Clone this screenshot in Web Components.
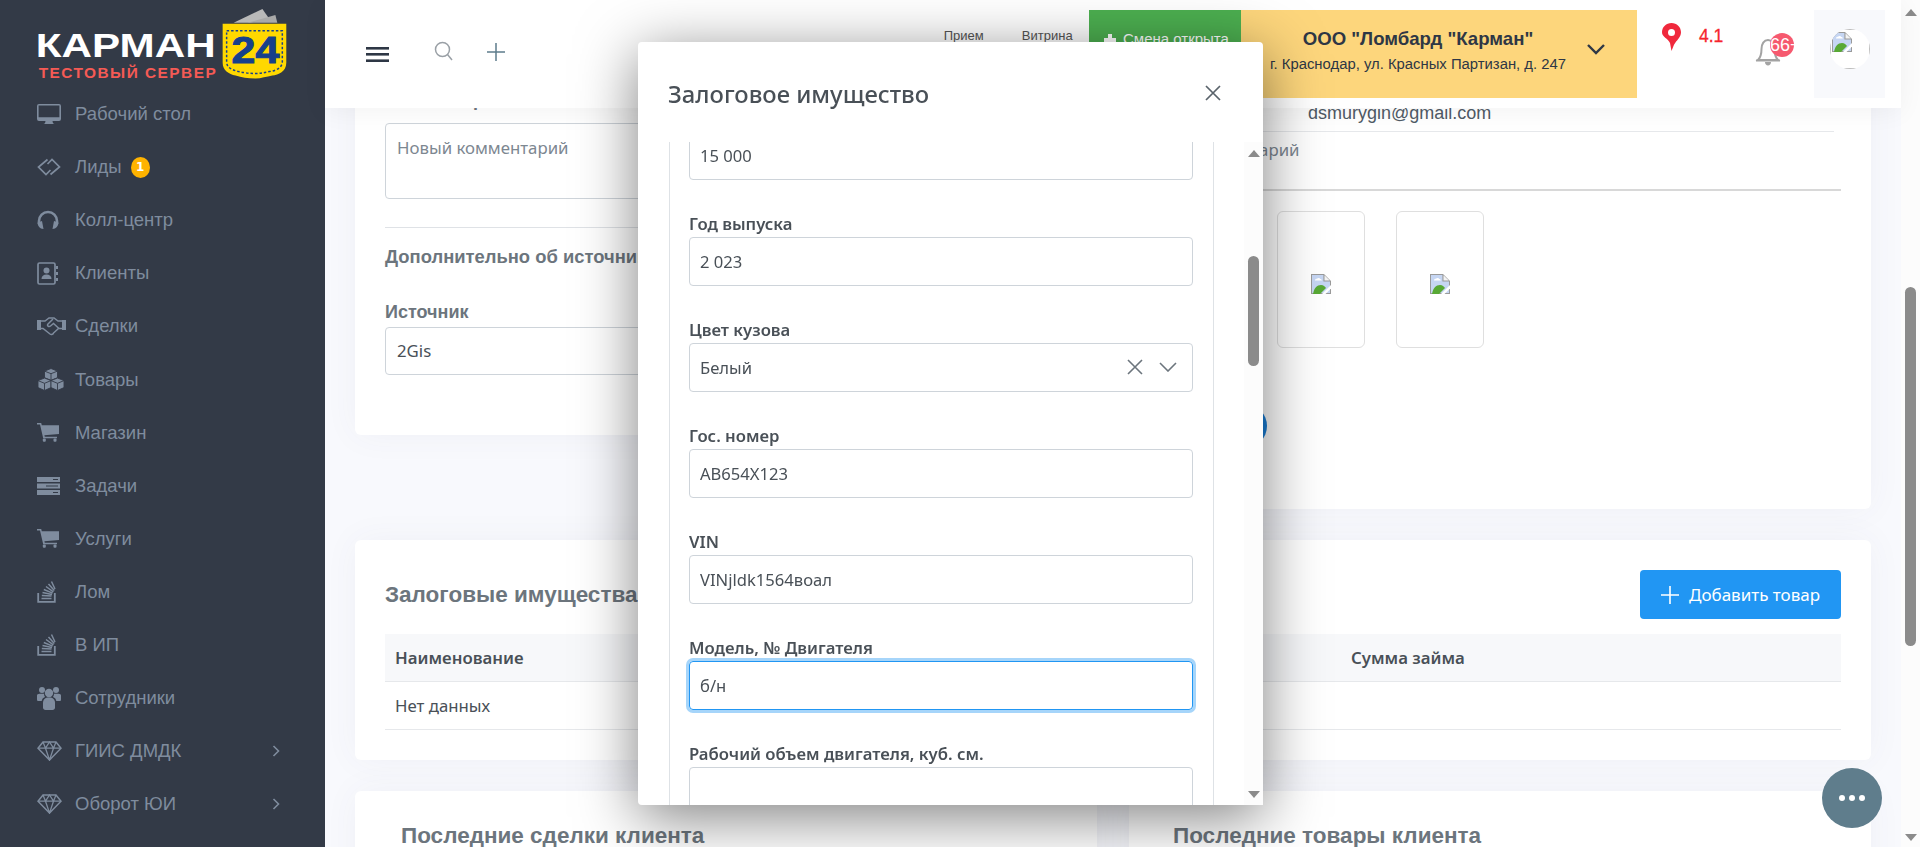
<!DOCTYPE html>
<html lang="ru">
<head>
<meta charset="utf-8">
<title>Залоговое имущество</title>
<style>
html, body { margin: 0; height: 847px; overflow: hidden; background: #f8f9fd; }
</style>
</head>
<body>
<app-shell></app-shell>
<script>
const ICONS = {
  desktop: '<svg width="24" height="21" viewBox="0 0 24 21"><path fill-rule="evenodd" d="M2 0h20a2 2 0 0 1 2 2v13a2 2 0 0 1-2 2H2a2 2 0 0 1-2-2V2a2 2 0 0 1 2-2zM1.6 1.6v11.6h20.8V1.6z"/><path d="M8.5 17h7l.5 2.2 1.5.8h-11l1.5-.8z"/></svg>',
  leads: '<svg width="24" height="18" viewBox="0 0 24 18" fill="none" stroke="currentColor" stroke-width="1.7"><path d="M10.5 1.500 1.500 9l7.500 7.500 4.500-4.500"/><path d="M13.500 16.500 22.500 9 15 1.500l-4.500 4.500"/></svg>',
  headset: '<svg width="22" height="20" viewBox="0 0 22 20"><path fill="none" stroke="currentColor" stroke-width="2.6" d="M2 14v-3a9 9 0 0 1 18 0v3"/><path d="M.6 12.500 5 11l1.500 8C2.800 19 .6 16 .6 12.500zM21.400 12.500 17 11l-1.500 8c3.700 0 5.900-3 5.900-6.500z"/></svg>',
  book: '<svg width="21" height="23" viewBox="0 0 21 23"><rect x="1" y="1" width="17" height="21" rx="1.500" fill="none" stroke="currentColor" stroke-width="1.700"/><circle cx="9.500" cy="8.500" r="3"/><path d="M4.500 17c0-3 2-4.500 5-4.500s5 1.500 5 4.500z"/><path d="M19 4h2v3h-2zM19 10h2v3h-2zM19 16h2v3h-2z"/></svg>',
  deal: '<svg width="29" height="20" viewBox="0 0 29 20" fill="none" stroke="currentColor" stroke-width="1.500"><path fill="currentColor" stroke="none" d="M0 4h4v10H0zM25 4h4v10h-4z"/><path d="M4 5h4l4-3h5l4 3h4M4 12.500h2l7 5.500c1.500 1 3.500 0 3.500-1l5-4.500H25"/><path d="M16 3l-5 5c-1.500 1.500.8 3.500 2.500 2l3-2.500 5.500 5"/></svg>',
  cubes: '<svg width="28" height="23" viewBox="0 0 28 23"><g stroke="#333a47" stroke-width=".9"><path fill="currentColor" d="M14 .5l6.500 2.600v6.600L14 12.300 7.500 9.700V3.100z"/><path fill="currentColor" d="M7.500 10 14 12.600v7L7.500 22.500 1 19.600v-7z"/><path fill="currentColor" d="M20.500 10 27 12.600v7l-6.500 2.900-6.500-2.900v-7z"/><path fill="none" d="M7.500 3.100 14 5.700l6.500-2.600M14 5.700v6.600M1 12.600l6.500 2.700 6.500-2.700M7.500 15.300v7.200M14 12.600l6.500 2.700 6.500-2.700M20.500 15.300v7.200"/></g></svg>',
  cart: '<svg width="22" height="19" viewBox="0 0 22 19"><path d="M0 0h4.200l.6 2.200H22v8.800L7.400 12.300l.4 1.500H20v1.500H6.200L3 1.600H0z"/><rect x="5.800" y="15.500" width="3" height="3.300" rx="1"/><rect x="16.500" y="15.500" width="3" height="3.300" rx="1"/></svg>',
  tasks: '<svg width="23" height="18" viewBox="0 0 23 18"><path fill-rule="evenodd" d="M0 0h23v5H0zM16 2v1h5V2zM0 6.500h23v5H0zM9 8.500v1h12v-1zM0 13h23v5H0zM16 15v1h5v-1z"/></svg>',
  stack: '<svg width="20" height="23" viewBox="0 0 20 23" fill="none" stroke="currentColor" stroke-width="1.500"><path stroke-width="1.800" d="M1.200 13v8.800h16.600V13"/><path d="M4.500 18.500h10M4.800 15.500l9.700.6M5.500 12.500l9.500 2M6.800 9.500l8.800 3.600M9 6.500l7.400 5.300M11.500 4l5.800 6.500M14.500 1.500l3.500 7.500"/></svg>',
  users: '<svg width="24" height="24" viewBox="0 0 24 24"><circle cx="5" cy="4" r="3"/><circle cx="19" cy="4" r="3"/><circle cx="12" cy="7" r="4.200"/><path d="M0 9.500c0-1 1-1.800 2.500-1.800H7a6 6 0 0 0 1 3.300c-2 .8-3 2-3.300 4H1.500C.5 15 0 14.500 0 13.500zM24 9.500c0-1-1-1.800-2.500-1.800H17a6 6 0 0 1-1 3.300c2 .8 3 2 3.300 4h3.200c1 0 1.500-.5 1.500-1.500z"/><path d="M6 17c0-3.500 2-5.500 6-5.500s6 2 6 5.500v4.500c0 1.500-1 2.500-2.500 2.500h-7C7 24 6 23 6 21.500z"/></svg>',
  gem: '<svg width="25" height="20" viewBox="0 0 25 20" fill="none" stroke="currentColor" stroke-width="1.300"><path stroke-width="1.500" d="M6 1h13l5 6.200L12.500 19 1 7.200z"/><path d="M1 7.200h23M8.500 7.200l4 11.800 4-11.800M6 1l2.500 6.200L12.500 1l4 6.200L19 1"/></svg>',
  chevron: '<svg width="8" height="12" viewBox="0 0 8 12" fill="none" stroke="currentColor" stroke-width="1.600"><path d="M1.500 1l5 5-5 5"/></svg>',
  dot: '<svg width="24" height="14" viewBox="0 0 24 14"><path d="M13 0l2 3h-4z"/></svg>'
};

const BROKEN = '<svg width="20" height="20" viewBox="0 0 20 20"><path fill="#9a9a9a" d="M0 0h13l7 7v13H0z"/><path fill="#c6d6f3" d="M1 1h11.400v6.600H19V19H1z"/><path fill="#fff" d="M4 6.500c0-1.300 1-1.900 2-1.700.5-1.200 2.700-1.200 3.200.1 1 0 1.700.6 1.700 1.600z"/><path fill="#f4f4f4" d="M13.500 1.300 18.800 6.500h-5.300z"/><path fill="#58a935" d="M2 20c1-6 4-9 8-9 2.500 0 4 1.500 5 3l-6 6z"/><path fill="#fff" d="M20 11v3.500L14.500 20H11z"/></svg>';

class AppShell extends HTMLElement {
  connectedCallback() {
    this.attachShadow({ mode: 'open' });
    this.shadowRoot.innerHTML = `
<style>
  :host { display: flex; width: 1920px; height: 847px; overflow: hidden; }
  .main { flex: 0 0 1576px; display: flex; flex-direction: column; height: 847px; min-width: 0; }
  page-content { flex: 1; min-height: 0; }
</style>
<app-sidebar></app-sidebar>
<div class="main">
  <app-header></app-header>
  <page-content></page-content>
</div>
<scroll-rail thumb-top="287" thumb-height="359" first="9" last="834" style="height:847px"></scroll-rail>
<pledge-modal></pledge-modal>
<chat-fab></chat-fab>`;
  }
}

class AppSidebar extends HTMLElement {
  connectedCallback() {
    this.attachShadow({ mode: 'open' });
    this.shadowRoot.innerHTML = `
<style>
  :host { display: block; flex: 0 0 325px; width: 325px; height: 847px; background: #333a47; overflow: hidden; }
  .logo { display: block; height: 87.500px; }
  svg text { font-family: "Liberation Sans", Arial, sans-serif; font-weight: 700; }
</style>
<svg class="logo" width="325" height="88" viewBox="0 0 325 88">
  <path fill="#b9b9b9" d="M234 23 263 9l7 10-20 4z"/>
  <path fill="#a9a9a9" d="M248 23l28-8 2 8z"/>
  <path fill="#ffd800" d="M223 24h64v39c0 9-8 12-14 13-6 1-11 3-17 3-8 0-14-1-20-3-7-2-13-5-13-13z"/>
  <path fill="none" stroke="#17408b" stroke-width="1.500" stroke-dasharray="2.500 2" d="M227 31h56v31c0 6-6 9-13 10-5 1-9 2-14 2-6 0-12-1-17-2-7-2-12-4-12-10z"/>
  <text x="232" y="63" font-size="37" fill="#17408b" textLength="48" lengthAdjust="spacingAndGlyphs" stroke="#17408b" stroke-width="1">24</text>
  <text x="35" y="57" font-size="33" fill="#ffffff" textLength="181" lengthAdjust="spacingAndGlyphs">КАРМАН</text>
  <text x="38" y="78" font-size="15.500" fill="#f55a55" textLength="178" lengthAdjust="spacing">ТЕСТОВЫЙ СЕРВЕР</text>
</svg>
<side-item icon="desktop">Рабочий стол</side-item>
<side-item icon="leads" badge="1">Лиды</side-item>
<side-item icon="headset">Колл-центр</side-item>
<side-item icon="book">Клиенты</side-item>
<side-item icon="deal">Сделки</side-item>
<side-item icon="cubes">Товары</side-item>
<side-item icon="cart">Магазин</side-item>
<side-item icon="tasks">Задачи</side-item>
<side-item icon="cart">Услуги</side-item>
<side-item icon="stack">Лом</side-item>
<side-item icon="stack">В ИП</side-item>
<side-item icon="users">Сотрудники</side-item>
<side-item icon="gem" arrow>ГИИС ДМДК</side-item>
<side-item icon="gem" arrow>Оборот ЮИ</side-item>
<side-item icon="dot"></side-item>`;
  }
}

class SideItem extends HTMLElement {
  connectedCallback() {
    const badge = this.getAttribute('badge');
    this.attachShadow({ mode: 'open' });
    this.shadowRoot.innerHTML = `
<style>
  :host { display: flex; align-items: center; height: 53.100px; padding: 0 45px 0 37px; color: #7f8c9e;
    font: 18.500px "Liberation Sans", Arial, sans-serif; }
  .ico { flex: 0 0 38px; display: flex; align-items: center; fill: currentColor; }
  .badge { margin-left: 9px; width: 19px; height: 21px; border-radius: 50%; background: #ffb300; color: #fff;
    font: 700 12px/21px "DejaVu Sans", sans-serif; text-align: center; }
  .arrow { margin-left: auto; display: flex; }
</style>
<span class="ico">${ICONS[this.getAttribute('icon')]}</span>
<slot></slot>
${badge ? `<span class="badge">${badge}</span>` : ''}
${this.hasAttribute('arrow') ? `<span class="arrow">${ICONS.chevron}</span>` : ''}`;
  }
}

class AppHeader extends HTMLElement {
  connectedCallback() {
    this.attachShadow({ mode: 'open' });
    this.shadowRoot.innerHTML = `
<style>
  :host { display: flex; flex: 0 0 108px; height: 108px; background: #fff; position: relative; z-index: 2;
    box-shadow: 0 4px 24px rgba(0,0,0,.05); font-family: "Liberation Sans", Arial, sans-serif; }
  .tools { display: flex; align-items: center; height: 100%; padding-left: 41px; }
  .burger { display: block; }
  .search { margin-left: 45px; margin-top: -6px; }
  .plus { margin-left: 33px; margin-top: -4px; }
  .stub { width: 14px; height: 2px; margin: 41px 0 0 305px; background: #9a9a9a; }
  .right { display: flex; height: 88px; margin: 10px 0 10px auto; }
  .stat { width: 83.500px; font-size: 13px; color: #555; text-align: center; padding-top: 18px; box-sizing: border-box; }
  .shift { width: 152px; background: #4caf50; color: #fff; font-size: 15px; display: flex; gap: 6px; padding: 20px 0 0 14px; box-sizing: border-box; }
  .shift svg { margin-top: 3px; }
  .org { width: 396px; background: #fdd67c; display: flex; color: #2e3745; box-sizing: border-box; padding-left: 28px; }
  .org-text { width: 298px; text-align: center; padding-top: 17px; }
  .org-name { font-size: 18.600px; font-weight: 700; line-height: 24px; white-space: nowrap; }
  .org-addr { font-size: 14.850px; line-height: 24px; margin-top: 1px; white-space: nowrap; }
  .org-chev { margin: 34px 0 0 20px; }
  .pin { margin: 13px 0 0 25px; }
  .rate { margin: 15px 0 0 18px; width: 25px; font-size: 17.500px; color: #f6252e; line-height: 22px; -webkit-text-stroke: .3px #f6252e; }
  .bell { position: relative; width: 50px; margin-left: 31px; }
  .bell svg { position: absolute; left: 0; top: 24px; }
  .count { position: absolute; left: 15px; top: 23px; width: 24px; height: 24px; border-radius: 50%; background: #f6596f;
    color: #fff; font-size: 18px; line-height: 24px; overflow: hidden; white-space: nowrap; }
  .avatar { width: 71px; margin: 0 16px 0 9px; background: #f8f9fc; display: flex; align-items: center; justify-content: center; }
  .ava { width: 40px; height: 40px; border-radius: 50%; overflow: hidden; margin-top: -10px; background: #fff; }
  .ava-img { width: 100%; height: 100%; box-sizing: border-box; border: 1px solid #bdbdbd; padding: 2px 0 0 1px; }
</style>
<div class="tools">
  <svg class="burger" width="23" height="15" viewBox="0 0 23 15" fill="#2e3745"><rect width="23" height="2.600"/><rect y="6" width="23" height="2.600"/><rect y="12.400" width="23" height="2.600"/></svg>
  <svg class="search" width="20" height="20" viewBox="0 0 20 20" fill="none" stroke="#9aa0a6" stroke-width="1.500"><circle cx="8.500" cy="8.500" r="7"/><path d="M13.500 13.500 18 19"/></svg>
  <svg class="plus" width="18" height="18" viewBox="0 0 18 18" fill="none" stroke="#5d7c8c" stroke-width="1.500"><path d="M9 0v18M0 9h18"/></svg>
  <span class="stub"></span>
</div>
<div class="right">
  <div class="stat">Прием</div>
  <div class="stat">Витрина</div>
  <div class="shift"><svg width="14" height="14" viewBox="0 0 14 14" fill="#fff"><path d="M5 1h4v4h4v4H9v4H5V9H1V5h4z"/></svg>Смена открыта</div>
  <div class="org">
    <div class="org-text"><div class="org-name">ООО "Ломбард "Карман"</div><div class="org-addr">г. Краснодар, ул. Красных Партизан, д. 247</div></div>
    <svg class="org-chev" width="18" height="11" viewBox="0 0 18 11" fill="none" stroke="#2e3745" stroke-width="2.400"><path d="M1 1l8 8 8-8"/></svg>
  </div>
  <svg class="pin" width="19" height="28" viewBox="0 0 19 28"><path fill="#f0283c" fill-rule="evenodd" d="M9.500 0C14.800 0 19 4 19 9.300c0 5-4.500 8-7 12.500L9.500 28 8 20C6 15.500 0 14 0 9.300 0 4 4.200 0 9.500 0zm0 6a3.500 3.500 0 1 0 0 7 3.500 3.500 0 0 0 0-7z"/></svg>
  <div class="rate">4.1</div>
  <div class="bell">
    <svg width="26" height="33" viewBox="0 0 26 33" fill="none" stroke="#a3a3a3" stroke-width="2"><path d="M3 26c3-3 3.500-7 3.500-11C6.500 10 9 6 13 6s6.500 4 6.500 9c0 4 .5 8 3.500 11z"/><path d="M1 26.500h24"/><path fill="#a3a3a3" stroke="none" d="M10 28h6c0 2-1.300 3.500-3 3.500S10 30 10 28z"/></svg>
    <div class="count">66+</div>
  </div>
  <div class="avatar"><div class="ava"><div class="ava-img">${BROKEN}</div></div></div>
</div>`;
  }
}

class PageContent extends HTMLElement {
  connectedCallback() {
    this.attachShadow({ mode: 'open' });
    this.shadowRoot.innerHTML = `
<style>
  :host { display: block; overflow: hidden; font-family: "Noto Sans", "Open Sans", sans-serif; color: #495057; }
  .scrolled { margin-top: -60px; padding: 0 30px; display: flex; flex-direction: column; gap: 31px; }
  .row1 { display: grid; grid-template-columns: 645px 840px; gap: 31px; align-items: start; }
  .row3 { display: grid; grid-template-columns: 742px 742px; gap: 32px; }
  h4 { margin: 0; font: 700 18.400px/24px "Liberation Sans", Arial, sans-serif; color: #6c757d; white-space: nowrap; }
  .lbl { font: 700 18px/24px "Liberation Sans", Arial, sans-serif; color: #6c757d; }
  .box { border: 1px solid #ced4da; border-radius: 4px; box-sizing: border-box; padding: 0 11px; font-size: 16.800px; }
  .left { padding: 40px 30px 60px; }
  .area { height: 76px; margin-top: 11px; padding-top: 12px; color: #7d8791; line-height: 24px; }
  .hr { height: 1px; background: #dfe2e6; margin: 28px 0 17px; }
  .sel { height: 48px; margin-top: 3px; padding-bottom: 2px; display: flex; align-items: center; }
  .right { padding: 53px 30px 61px; }
  .mail { margin-left: 247px; font: 18px/24px "Liberation Sans", Arial, sans-serif; color: #4f5a66; }
  .thin { height: 1px; background: #e6e8eb; margin: 6px 7px 6px 0; }
  .ph { margin-left: 67px; font-size: 16.800px; line-height: 24px; color: #7d8791; }
  .thick { height: 2px; background: #d8d8d8; margin: 27px 0 20px; }
  .photos { display: flex; gap: 31px; margin-left: 216px; }
  .photo { width: 88px; height: 137px; border: 1px solid #dfdfdf; border-radius: 6px; box-sizing: border-box; display: flex; align-items: center; justify-content: center; padding-top: 8px; }
  .round { width: 44px; height: 44px; border-radius: 50%; background: #1a7fd8; margin: 56px 0 0 162px; }
  .pledge { padding: 30px 30px; }
  .top { display: flex; justify-content: space-between; align-items: center; margin-bottom: 15px; }
  h3 { margin: 0; font: 700 22.500px/24px "Liberation Sans", Arial, sans-serif; color: #6c757d; }
  .btn { width: 201px; height: 49px; background: #2196f3; color: #fff; border-radius: 4px; font-size: 17px; display: flex; align-items: center; gap: 10px; padding-left: 21px; box-sizing: border-box; }
  .tr { display: grid; grid-template-columns: 956px 1fr; align-items: center; border-bottom: 1px solid #e6e8eb; font-size: 16.800px; }
  .th { height: 48px; background: #f7f8fa; font-weight: 600; box-sizing: border-box; }
  .td { height: 48px; box-sizing: border-box; }
  .tr > span { padding-left: 10px; }
  .last { padding: 33px 46px 60px; }
  .last.r { padding-left: 44px; }
</style>
<div class="scrolled">
  <div class="row1">
    <info-card class="left">
      <div class="lbl">Комментарий</div>
      <div class="box area">Новый комментарий</div>
      <div class="hr"></div>
      <h4>Дополнительно об источнике</h4>
      <div class="lbl" style="margin-top:31px">Источник</div>
      <div class="box sel">2Gis</div>
    </info-card>
    <info-card class="right">
      <div class="mail">dsmurygin@gmail.com</div>
      <div class="thin"></div>
      <div class="ph">Новый комментарий</div>
      <div class="thick"></div>
      <div class="photos"><div class="photo">${BROKEN}</div><div class="photo">${BROKEN}</div></div>
      <div class="round"></div>
    </info-card>
  </div>
  <info-card class="pledge">
    <div class="top"><h3>Залоговые имущества</h3>
      <div class="btn"><svg width="18" height="18" viewBox="0 0 18 18" fill="none" stroke="#fff" stroke-width="1.600"><path d="M9 0v18M0 9h18"/></svg>Добавить товар</div></div>
    <div class="tr th"><span>Наименование</span><span>Сумма займа</span></div>
    <div class="tr td"><span>Нет данных</span><span></span></div>
  </info-card>
  <div class="row3">
    <info-card class="last"><h3>Последние сделки клиента</h3></info-card>
    <info-card class="last r"><h3>Последние товары клиента</h3></info-card>
  </div>
</div>`;
  }
}

class InfoCard extends HTMLElement {
  connectedCallback() {
    this.attachShadow({ mode: 'open' });
    this.shadowRoot.innerHTML = `
<style>
  :host { display: block; background: #fff; border-radius: 6px; box-shadow: 0 0 34px rgba(70,80,110,.05); }
</style>
<slot></slot>`;
  }
}

class ScrollRail extends HTMLElement {
  connectedCallback() {
    const first = +this.getAttribute('first');
    const last = +this.getAttribute('last');
    const top = +this.getAttribute('thumb-top');
    const h = +this.getAttribute('thumb-height');
    this.attachShadow({ mode: 'open' });
    this.shadowRoot.innerHTML = `
<style>
  :host { display: flex; flex-direction: column; align-items: center; flex: 0 0 19px; width: 19px; background: #fcfcfc; box-sizing: border-box; }
  .up, .down { width: 0; height: 0; border-left: 6px solid transparent; border-right: 6px solid transparent; }
  .up { border-bottom: 7px solid #8b8b8b; margin-top: ${first}px; }
  .down { border-top: 7px solid #8b8b8b; position: absolute; margin-top: ${last}px; }
  .thumb { width: 11px; height: ${h}px; margin-top: ${top - first - 7}px; border-radius: 6px; background: #8b8b8b; }
</style>
<div class="up"></div><div class="down"></div><div class="thumb"></div>`;
  }
}

class FormField extends HTMLElement {
  connectedCallback() {
    const focus = this.hasAttribute('focused');
    const label = this.getAttribute('label');
    this.attachShadow({ mode: 'open' });
    this.shadowRoot.innerHTML = `
<style>
  :host { display: block; margin-bottom: 33px; }
  label { display: block; height: 24px; font-weight: 600; font-size: 16.700px; line-height: 22px; color: #495057; white-space: nowrap; }
  .input { display: flex; align-items: center; height: 49px; box-sizing: border-box; border: 1px solid #ced4da; border-radius: 4px; padding: 0 10px 1px; font-size: 16.600px; color: #495057; }
  .focus { border-color: #2196f3; box-shadow: 0 0 0 3px #a6d5fa; }
  .acts { margin-left: auto; display: flex; gap: 16px; align-items: center; padding-right: 5px; }
</style>
${label ? `<label>${label}</label>` : ''}
<div class="input ${focus ? 'focus' : ''}"><slot></slot>${this.hasAttribute('select') ? `<span class="acts">
  <svg width="16" height="16" viewBox="0 0 16 16" fill="none" stroke="#6c757d" stroke-width="1.600"><path d="M1 1l14 14M15 1 1 15"/></svg>
  <svg width="18" height="10" viewBox="0 0 18 10" fill="none" stroke="#6c757d" stroke-width="1.600"><path d="M1 1l8 8 8-8"/></svg></span>` : ''}</div>`;
  }
}

class PledgeModal extends HTMLElement {
  connectedCallback() {
    this.attachShadow({ mode: 'open' });
    this.shadowRoot.innerHTML = `
<style>
  :host { position: fixed; left: 638px; top: 42px; width: 625px; height: 763px; background: #fff; border-radius: 4px; z-index: 5;
    box-shadow: 0 12px 60px rgba(0,0,0,.5); display: flex; flex-direction: column; font-family: "Noto Sans", "Open Sans", sans-serif; }
  .head { flex: 0 0 100px; display: flex; align-items: flex-start; padding: 36px 0 0 30px; box-sizing: border-box; }
  h2 { margin: 0; font-size: 23.800px; line-height: 32px; font-weight: 500; color: #495057; }
  .close { margin: 6px 41px 0 auto; }
  .body { flex: 1; min-height: 0; display: flex; }
  .frame { width: 545px; margin-left: 31px; border: solid #dee2e6; border-width: 0 1px; box-sizing: border-box; padding: 0 20px 0 19px; overflow: hidden; }
  .inner { margin-top: -11px; }
  scroll-rail { margin-left: 30px; }
</style>
<div class="head">
  <h2>Залоговое имущество</h2>
  <svg class="close" width="18" height="18" viewBox="0 0 18 18" fill="none" stroke="#5a636b" stroke-width="1.700"><path d="M2 2l14 14M16 2 2 16"/></svg>
</div>
<div class="body">
  <div class="frame"><div class="inner">
    <form-field>15 000</form-field>
    <form-field label="Год выпуска">2 023</form-field>
    <form-field label="Цвет кузова" select>Белый</form-field>
    <form-field label="Гос. номер">АВ654Х123</form-field>
    <form-field label="VIN">VINjldk1564воал</form-field>
    <form-field label="Модель, № Двигателя" focused>б/н</form-field>
    <form-field label="Рабочий объем двигателя, куб. см."></form-field>
  </div></div>
  <scroll-rail thumb-top="114" thumb-height="110" first="8" last="649"></scroll-rail>
</div>`;
  }
}

class ChatFab extends HTMLElement {
  connectedCallback() {
    this.attachShadow({ mode: 'open' });
    this.shadowRoot.innerHTML = `
<style>
  :host { position: fixed; left: 1822px; top: 768px; width: 60px; height: 60px; border-radius: 50%; background: #5f7d8c; z-index: 6;
    display: flex; align-items: center; justify-content: center; gap: 4px; }
  i { width: 6px; height: 6px; border-radius: 50%; background: #fff; }
</style>
<i></i><i></i><i></i>`;
  }
}

customElements.define('app-shell', AppShell);
customElements.define('app-sidebar', AppSidebar);
customElements.define('side-item', SideItem);
customElements.define('app-header', AppHeader);
customElements.define('page-content', PageContent);
customElements.define('info-card', InfoCard);
customElements.define('scroll-rail', ScrollRail);
customElements.define('form-field', FormField);
customElements.define('pledge-modal', PledgeModal);
customElements.define('chat-fab', ChatFab);
</script>
</body>
</html>
